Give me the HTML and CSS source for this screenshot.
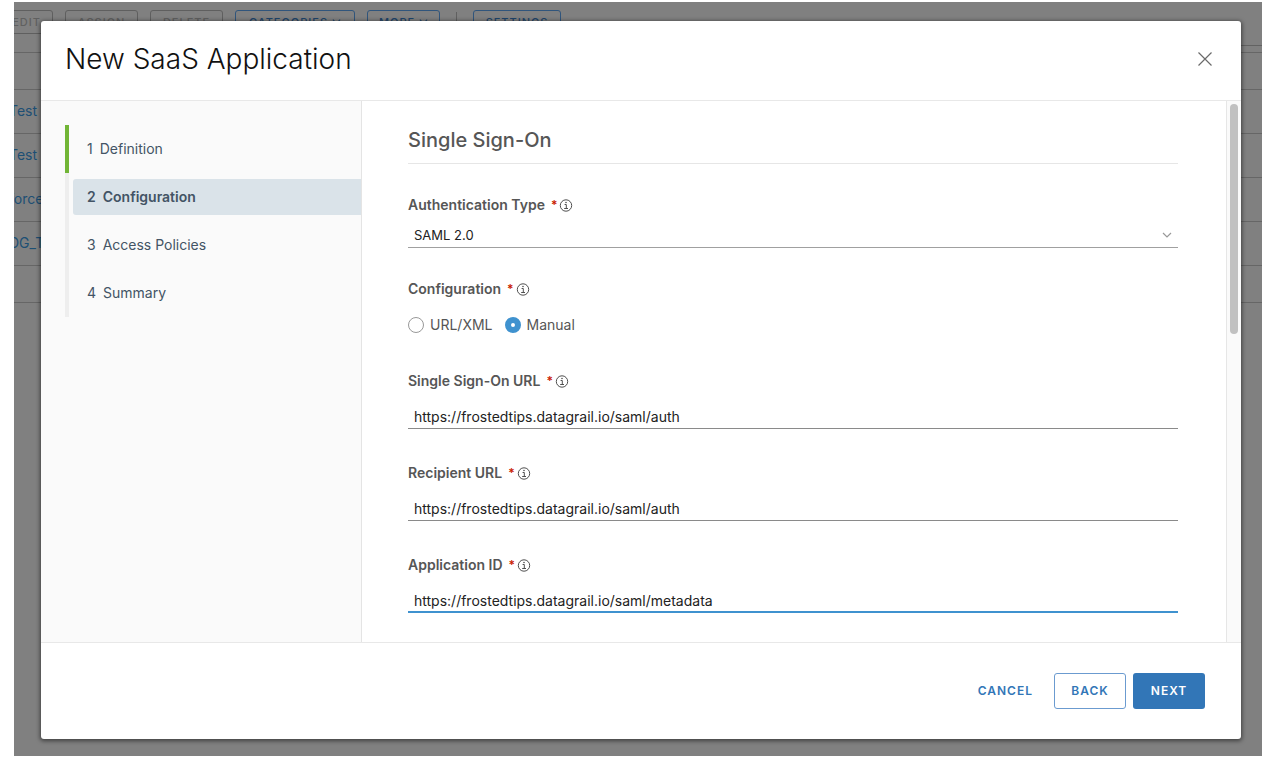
FILE: index.html
```html
<!DOCTYPE html>
<html lang="en">
<head>
<meta charset="utf-8">
<title>New SaaS Application</title>
<link rel="stylesheet" href="styles.css">
</head>
<body>
<svg class="symbols" aria-hidden="true">
  <symbol id="info" viewBox="0 0 14 14">
    <circle cx="7" cy="7.5" r="5.7" fill="none" stroke="currentColor"/>
    <path d="M5.6 6.5H7.3V10.5M5.2 10.5H9" fill="none" stroke="currentColor"/>
    <circle cx="7" cy="4.5" r=".8" fill="currentColor"/>
  </symbol>
  <symbol id="chevron" viewBox="0 0 10 10">
    <path d="M1 3L5 7L9 3" fill="none" stroke="currentColor" stroke-width="1.2"/>
  </symbol>
</svg>
<main class="stage">
  <div class="backdrop" aria-hidden="true">
    <div class="toolbar">
      <button class="tool tool-edit" disabled>EDIT</button>
      <button class="tool tool-assign" disabled>ASSIGN</button>
      <button class="tool tool-assign" disabled>DELETE</button>
      <button class="tool tool-categories tool-on">CATEGORIES <svg class="chevron"><use href="#chevron"/></svg></button>
      <button class="tool tool-more tool-on">MORE <svg class="chevron"><use href="#chevron"/></svg></button>
      <span class="divider"></span>
      <button class="tool tool-settings tool-on">SETTINGS</button>
    </div>
    <div class="rule"></div>
    <div class="rows">
      <div class="row row-short"></div>
      <div class="row"><a href="#">Test</a></div>
      <div class="row"><a href="#">Test</a></div>
      <div class="row"><a href="#">force</a></div>
      <div class="row"><a href="#">DG_T</a></div>
      <div class="row row-short"></div>
    </div>
  </div>

  <section class="dialog" role="dialog" aria-labelledby="title">
    <header class="dialog-header">
      <h1 id="title">New SaaS Application</h1>
      <button class="close" aria-label="Close">
        <svg viewBox="0 0 14 14"><path d="M.5 .5L13.5 13.5M13.5 .5L.5 13.5" fill="none" stroke="currentColor" stroke-width="1.2"/></svg>
      </button>
    </header>
    <div class="dialog-body">
      <nav class="steps">
        <ol>
          <li class="step done"><a href="#"><span>1</span>Definition</a></li>
          <li class="step active"><a href="#" aria-current="step"><span>2</span>Configuration</a></li>
          <li class="step"><a href="#"><span>3</span>Access Policies</a></li>
          <li class="step"><a href="#"><span>4</span>Summary</a></li>
        </ol>
      </nav>
      <form class="content" id="config">
        <h2>Single Sign-On</h2>
        <div class="field">
          <div class="label"><label for="auth">Authentication Type</label><span class="req">*</span><svg class="info"><use href="#info"/></svg></div>
          <div class="select">
            <select id="auth"><option>SAML 2.0</option></select>
            <svg class="chevron"><use href="#chevron"/></svg>
          </div>
        </div>
        <div class="field" role="radiogroup" aria-labelledby="conf">
          <div class="label"><span id="conf">Configuration</span><span class="req">*</span><svg class="info"><use href="#info"/></svg></div>
          <div class="radios">
            <label><input type="radio" name="mode">URL/XML</label>
            <label><input type="radio" name="mode" checked>Manual</label>
          </div>
        </div>
        <div class="field">
          <div class="label"><label for="sso">Single Sign-On URL</label><span class="req">*</span><svg class="info"><use href="#info"/></svg></div>
          <input class="text" id="sso" type="text" value="https://frostedtips.datagrail.io/saml/auth">
        </div>
        <div class="field">
          <div class="label"><label for="recipient">Recipient URL</label><span class="req">*</span><svg class="info"><use href="#info"/></svg></div>
          <input class="text" id="recipient" type="text" value="https://frostedtips.datagrail.io/saml/auth">
        </div>
        <div class="field">
          <div class="label"><label for="appid">Application ID</label><span class="req">*</span><svg class="info"><use href="#info"/></svg></div>
          <input class="text focused" id="appid" type="text" value="https://frostedtips.datagrail.io/saml/metadata">
        </div>
      </form>
      <div class="track"><div class="thumb"></div></div>
    </div>
    <footer class="dialog-footer">
      <button class="btn link">CANCEL</button>
      <button class="btn outline">BACK</button>
      <button class="btn primary">NEXT</button>
    </footer>
  </section>
</main>
</body>
</html>
```

FILE: styles.css
```css
* { box-sizing: border-box; }
body {
  margin: 0;
  padding: 2px 12px 6px 14px;
  min-height: 100vh;
  display: flex;
  background: #fff;
  font: 14px/20px Inter, "Open Sans", sans-serif;
  color: #565656;
}
button, input, select { font: inherit; color: inherit; margin: 0; }
a { color: inherit; text-decoration: none; }
.symbols { position: absolute; width: 0; height: 0; }
.chevron { width: 10px; height: 10px; }

.stage { flex: 1; display: grid; background: #808080; overflow: hidden; }
.backdrop, .dialog { grid-area: 1 / 1; min-width: 0; }

.toolbar { display: flex; gap: 12px; padding-top: 8px; margin-left: -14px; }
.tool {
  flex: none;
  height: 24px;
  padding: 0;
  border: 1px solid #5f5f5f;
  border-radius: 3px;
  background: none;
  font-size: 11px;
  font-weight: 500;
  line-height: 22px;
  letter-spacing: 1px;
  color: #606060;
}
.tool-on { border-color: #30557c; color: #1e456c; }
.tool .chevron { width: 9px; height: 9px; }
.tool-edit { width: 53px; }
.tool-assign { width: 73px; }
.tool-categories { width: 120px; }
.tool-more { width: 73px; }
.tool-settings { width: 88px; margin-left: 4px; }
.divider { width: 1px; height: 20px; margin: 2px 0 0 4px; background: #606060; }
.rule { width: 50%; margin: 11px 0 6px auto; border-top: 1px solid #626262; }
.rows { border-top: 1px solid #666; margin-left: -5px; }
.row { height: 44px; border-bottom: 1px solid #666; line-height: 42px; color: #1d4f74; }
.row-short { height: 37px; }

.dialog {
  display: flex;
  flex-direction: column;
  margin: 19px 21px 17px 27px;
  background: #fff;
  border-radius: 3px;
  box-shadow: 0 1px 4px 1px rgba(0, 0, 0, .5);
  z-index: 1;
}
.dialog-header {
  display: flex;
  align-items: center;
  justify-content: space-between;
  padding: 20px 28px 23px 24px;
  border-bottom: 1px solid #e8e8e8;
}
h1 { margin: 0; font-size: 28px; line-height: 36px; font-weight: 300; color: #111; }
.close { display: flex; padding: 1px; border: 0; background: none; color: #6a6a6a; }
.close svg { width: 14px; height: 14px; }

.dialog-body { flex: 1; display: flex; }
.steps { width: 321px; padding: 24px 0 0 24px; background: #fafafa; border-right: 1px solid #e4e4e4; }
.steps ol { list-style: none; margin: 0; padding: 0; }
.step { height: 48px; padding: 6px 0 6px 4px; border-left: 4px solid #eee; color: #435465; }
.step a { display: flex; gap: 7px; padding: 8px 14px; border-radius: 3px 0 0 3px; }
.step.done { border-color: #71b536; }
.step.active a { background: #dae3e9; font-weight: 600; }

.content { flex: 1; min-width: 0; padding: 27px 48px 28px 46px; }
h2 {
  margin: 0 0 31px;
  padding-bottom: 11px;
  border-bottom: 1px solid #e6e6e6;
  font-size: 20px;
  line-height: 24px;
  font-weight: 500;
  color: #565656;
}
.field { display: flex; flex-direction: column; gap: 12px; margin-bottom: 34px; }
.field:last-child { margin-bottom: 0; }
.label { display: flex; align-items: center; font-weight: 600; }
.req { margin: 0 2px 0 6px; color: #c92100; font-size: 12px; }
.info { width: 14px; height: 14px; color: #4f4f4f; }
.select { display: flex; align-items: center; height: 25px; margin: -4px 0 -3px; border-bottom: 1px solid #a0a0a0; padding-right: 6px; }
.select select { flex: 1; padding: 0 6px; border: 0; background: none; appearance: none; outline: 0; font-size: 13px; color: #222; }
.select .chevron { color: #999; }
.radios { display: flex; gap: 12px; padding: 4px 0 2px; }
.radios label { display: flex; align-items: center; gap: 6px; }
.radios input { appearance: none; width: 16px; height: 16px; border: 1px solid #999; border-radius: 50%; background: #fff; }
.radios input:checked { border: 6px solid #3f92cf; }
.text {
  width: 100%;
  height: 26px;
  padding: 2px 6px 0;
  border: 0;
  border-bottom: 1px solid #8a8a8a;
  background: none;
  outline: 0;
  font-size: 14px;
  color: #222;
}
.text.focused { border-bottom: 2px solid #3f92cf; }
.track { width: 15px; padding: 3px; background: #fafafa; border-left: 1px solid #e6e6e6; }
.thumb { width: 8px; height: 43%; border-radius: 4px; background: #c1c1c1; }

.dialog-footer {
  display: flex;
  justify-content: flex-end;
  padding: 30px 36px;
  border-top: 1px solid #e8e8e8;
}
.btn {
  min-width: 72px;
  height: 36px;
  padding: 0 12px;
  border: 1px solid transparent;
  border-radius: 3px;
  background: none;
  font-size: 12px;
  font-weight: 600;
  letter-spacing: 1px;
  color: #3276b7;
}
.link { margin-right: 8px; }
.outline { border-color: #6b9bd0; margin-right: 7px; }
.primary { background: #3276b7; color: #fff; }
```
